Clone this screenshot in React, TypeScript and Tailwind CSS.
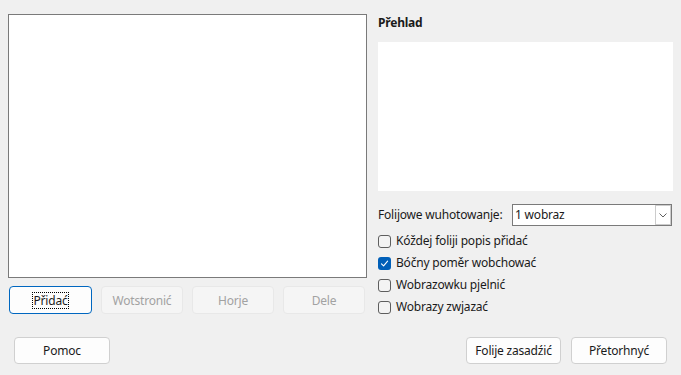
import React from 'react'

const font = { fontFamily: '"Segoe UI", "Noto Sans", "Liberation Sans", sans-serif' }

function Button({
  label,
  disabled,
  focused,
  className = '',
}: {
  label: string
  disabled?: boolean
  focused?: boolean
  className?: string
}): JSX.Element {
  let tone = 'bg-[#fdfdfd] border-[#d0d0d0] text-[#1a1a1a]'
  if (disabled) tone = 'bg-[#f5f5f5] border-[#e8e8e8] text-[#a2a2a2]'
  if (focused) tone = 'bg-[#fdfdfd] border-[#0067c0] text-[#1a1a1a]'
  return (
    <button
      disabled={disabled}
      className={`flex shrink-0 items-center justify-center rounded-[4px] border text-[12px] ${tone} ${className}`}
    >
      <span
        className={
          focused
            ? 'border border-dotted border-black px-[1px] leading-[15px]'
            : 'leading-[15px]'
        }
      >
        {label}
      </span>
    </button>
  )
}

function Checkbox({
  label,
  checked,
}: {
  label: string
  checked?: boolean
}): JSX.Element {
  return (
    <div className="flex h-[22px] items-center">
      {checked ? (
        <span className="flex h-[13px] w-[13px] items-center justify-center rounded-[3px] bg-[#005fb8]">
          <svg width="9" height="9" viewBox="0 0 9 9" fill="none">
            <path
              d="M1.5 4.8 L3.6 6.8 L7.6 2.2"
              stroke="white"
              strokeWidth="1.1"
              strokeLinecap="round"
              strokeLinejoin="round"
            />
          </svg>
        </span>
      ) : (
        <span className="h-[13px] w-[13px] rounded-[3px] border border-[#5e5e5e] bg-[#f3f3f3]" />
      )}
      <span className="ml-[5px] text-[12px] leading-[16px] text-[#1a1a1a]">
        {label}
      </span>
    </div>
  )
}

export default function App(): JSX.Element {
  return (
    <div
      style={font}
      className="flex h-[375px] w-[681px] flex-col bg-[#f0f0f0] pl-[8px] pt-[14px] tracking-[-0.2px] text-[#1a1a1a]"
    >
      <div className="flex">
        <div className="flex w-[359px] shrink-0 flex-col">
          <div className="h-[264px] border border-[#7a7a7a] bg-white" />
          <div className="mt-[8px] flex gap-[9px] pl-[1px]">
            <Button label="Přidać" focused className="h-[28px] w-[83px]" />
            <Button label="Wotstronić" disabled className="h-[28px] w-[82px]" />
            <Button label="Horje" disabled className="h-[28px] w-[82px]" />
            <Button label="Dele" disabled className="h-[28px] w-[82px]" />
          </div>
        </div>
        <div className="ml-[11px] flex w-[295px] shrink-0 flex-col">
          <div className="mt-[1px] h-[16px] text-[12px] font-bold leading-[16px]">
            Přehlad
          </div>
          <div className="mt-[11px] h-[149px] w-[295px] bg-white" />
          <div className="mt-[13px] flex h-[22px] items-center">
            <span className="w-[134px] text-[12px] leading-[16px]">
              Folijowe wuhotowanje:
            </span>
            <div className="flex h-[22px] w-[160px] items-center border border-[#7a7a7a] bg-white">
              <span className="ml-[2px] flex-1 text-[12px] leading-[16px]">
                1 wobraz
              </span>
              <span className="flex h-[20px] w-[16px] items-center justify-center border border-[#cccccc] bg-white">
                <svg width="8" height="5" viewBox="0 0 8 5" fill="none">
                  <path d="M0.5 0.5 L4 4 L7.5 0.5" stroke="#606060" strokeWidth="1" />
                </svg>
              </span>
            </div>
          </div>
          <div className="mt-[4px] flex flex-col">
            <Checkbox label="Kóždej foliji popis přidać" />
            <Checkbox label="Bóčny poměr wobchować" checked />
            <Checkbox label="Wobrazowku pjelnić" />
            <Checkbox label="Wobrazy zwjazać" />
          </div>
        </div>
      </div>
      <div className="mt-[19px] flex pr-[14px]">
        <Button label="Pomoc" className="ml-[6px] h-[27px] w-[96px]" />
        <div className="ml-auto flex gap-[10px]">
          <Button label="Folije zasadźić" className="h-[27px] w-[95px]" />
          <Button label="Přetorhnyć" className="h-[27px] w-[96px]" />
        </div>
      </div>
    </div>
  )
}
